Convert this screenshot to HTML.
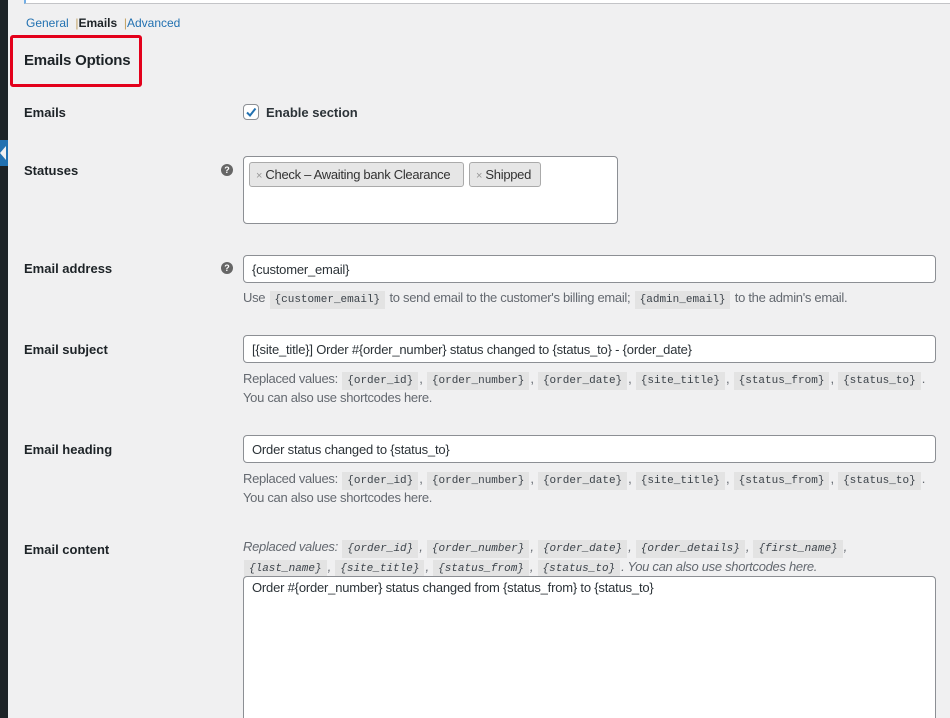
<!DOCTYPE html>
<html style="width:950px;height:718px;overflow:hidden"><head><meta charset="utf-8"><style>
*{box-sizing:border-box;margin:0;padding:0}
body{width:950px;height:718px;overflow:hidden;background:#f0f0f1;font-family:"Liberation Sans",sans-serif;color:#1d2327;position:relative}
.a{position:absolute;white-space:nowrap}
.lbl{position:absolute;left:24px;font-size:13px;font-weight:bold;color:#1d2327}
.inp{position:absolute;left:243px;width:693px;height:28px;background:#fff;border:1px solid #8c8f94;border-radius:4px;font-size:13px;padding:6px 8px;color:#2c3338;letter-spacing:-0.2px;white-space:nowrap}
.d{position:absolute;left:243px;font-size:13px;color:#646970;white-space:nowrap;letter-spacing:-0.3px}
code{font-family:"Liberation Mono",monospace;font-size:11px;background:#e3e3e3;color:#3c434a;padding:3px 5px;letter-spacing:0;margin:0 1px}
.q{position:absolute;left:221px;width:12px;height:12px;border-radius:50%;background:#666;color:#fff;font-size:9px;font-weight:bold;text-align:center;line-height:12px}
.chip{position:absolute;top:162px;height:25px;background:#e6e6e6;border:1px solid #aaa;border-radius:3px;font-size:13px;color:#333;padding:4px 0 0 6px;white-space:nowrap;overflow:hidden;letter-spacing:-0.3px}
.chip b{color:#999;font-weight:normal;font-size:11px}
</style></head><body>
<div class="a" style="left:0;top:0;width:8px;height:718px;background:#1d2327"></div>
<div class="a" style="left:0;top:140px;width:8px;height:26px;background:#2271b1"></div>
<div class="a" style="left:0;top:146px;width:0;height:0;border-top:7px solid transparent;border-bottom:7px solid transparent;border-right:6px solid #f0f0f1"></div>
<div class="a" style="left:24px;top:-4px;width:926px;height:8px;background:#fff;border-left:2px solid #72aee6;border-bottom:1px solid #c3c4c7"></div>
<div class="a" style="left:26px;top:16px;font-size:12px;color:#2271b1">General &nbsp;<span style="color:#c3a060">|</span><b style="color:#1d2327">Emails</b> &nbsp;<span style="color:#c3a060">|</span>Advanced</div>
<div class="a" style="left:10px;top:35px;width:132px;height:52px;border:3px solid #e3001b;border-radius:3px"></div>
<div class="a" style="left:24px;top:52px;font-size:15px;font-weight:bold;color:#1d2327;letter-spacing:-0.2px">Emails Options</div>

<div class="lbl" style="top:105px">Emails</div>
<div class="a" style="left:243px;top:104px;width:16px;height:16px;background:#fff;border:1px solid #8c8f94;border-radius:4px"><svg width="14" height="14" viewBox="0 0 14 14" style="position:absolute;left:0;top:0"><path d="M3 7.5L6 10.5L11.5 3.5" fill="none" stroke="#2271b1" stroke-width="2"/></svg></div>
<div class="a" style="left:266px;top:105px;font-size:13px;font-weight:bold;color:#2c3338">Enable section</div>

<div class="lbl" style="top:163px">Statuses</div>
<div class="q" style="top:164px">?</div>
<div class="a" style="left:243px;top:156px;width:375px;height:68px;background:#fff;border:1px solid #8c8f94;border-radius:4px"></div>
<div class="chip" style="left:249px;width:215px"><b>×</b> Check – Awaiting bank Clearance</div>
<div class="chip" style="left:469px;width:72px"><b>×</b> Shipped</div>

<div class="lbl" style="top:261px">Email address</div>
<div class="q" style="top:262px">?</div>
<div class="inp" style="top:255px;height:28px">{customer_email}</div>
<div class="d" style="top:290px">Use <code>{customer_email}</code> to send email to the customer's billing email; <code>{admin_email}</code> to the admin's email.</div>

<div class="lbl" style="top:342px">Email subject</div>
<div class="inp" style="top:335px">[{site_title}] Order #{order_number} status changed to {status_to} - {order_date}</div>
<div class="d" style="top:371px">Replaced values: <code>{order_id}</code>, <code>{order_number}</code>, <code>{order_date}</code>, <code>{site_title}</code>, <code>{status_from}</code>, <code>{status_to}</code>.</div>
<div class="d" style="top:390px">You can also use shortcodes here.</div>

<div class="lbl" style="top:442px">Email heading</div>
<div class="inp" style="top:435px">Order status changed to {status_to}</div>
<div class="d" style="top:471px">Replaced values: <code>{order_id}</code>, <code>{order_number}</code>, <code>{order_date}</code>, <code>{site_title}</code>, <code>{status_from}</code>, <code>{status_to}</code>.</div>
<div class="d" style="top:490px">You can also use shortcodes here.</div>

<div class="lbl" style="top:542px">Email content</div>
<div class="d" style="top:539px;font-style:italic">Replaced values: <code><i>{order_id}</i></code>, <code><i>{order_number}</i></code>, <code><i>{order_date}</i></code>, <code><i>{order_details}</i></code>, <code><i>{first_name}</i></code>,</div>
<div class="d" style="top:559px;font-style:italic"><code><i>{last_name}</i></code>, <code><i>{site_title}</i></code>, <code><i>{status_from}</i></code>, <code><i>{status_to}</i></code>. You can also use shortcodes here.</div>
<div class="inp" style="top:576px;height:142px;padding:3px 8px;border-bottom:none;border-radius:4px 4px 0 0">Order #{order_number} status changed from {status_from} to {status_to}</div>
</body></html>
